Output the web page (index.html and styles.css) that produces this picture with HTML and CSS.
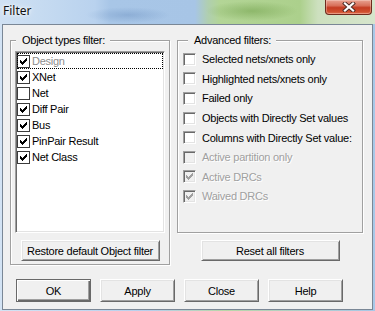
FILE: index.html
```html
<!DOCTYPE html>
<html lang="en">
<head>
    <meta charset="UTF-8">
    <meta name="viewport" content="width=device-width, initial-scale=1.0">
    <title>Filter</title>
    <link rel="stylesheet" href="styles.css">
</head>
<body>
    <div class="window">
        <div class="titlebar">
            <span class="title">Filter</span>
            <div class="close-btn">
                <svg width="14" height="10" viewBox="0 0 14 10">
                    <path d="M3 1.5L11 8.5M11 1.5L3 8.5" stroke="#4a2a24" stroke-width="4" stroke-linecap="square"/>
                    <path d="M3 1.5L11 8.5M11 1.5L3 8.5" stroke="#fff" stroke-width="2.2" stroke-linecap="square"/>
                </svg>
            </div>
        </div>

        <div class="client">
            <div class="panels">
                <!-- Object types -->
                <fieldset class="group group-types">
                    <legend>Object types filter:</legend>
                    <div class="listbox">
                        <div class="list-item focused greyed"><span class="flat-check"><svg class="tick" width="7" height="7" viewBox="0 0 7 7"><path d="M6 0h1v1H6zM5 1h2v1H5zM0 2h1v1H0zM4 2h3v1H4zM0 3h2v1H0zM3 3h3v1H3zM0 4h5v1H0zM1 5h3v1H1zM2 6h1v1H2z"/></svg></span>Design</div>
                        <div class="list-item"><span class="flat-check"><svg class="tick" width="7" height="7" viewBox="0 0 7 7"><path d="M6 0h1v1H6zM5 1h2v1H5zM0 2h1v1H0zM4 2h3v1H4zM0 3h2v1H0zM3 3h3v1H3zM0 4h5v1H0zM1 5h3v1H1zM2 6h1v1H2z"/></svg></span>XNet</div>
                        <div class="list-item"><span class="flat-check"></span>Net</div>
                        <div class="list-item"><span class="flat-check"><svg class="tick" width="7" height="7" viewBox="0 0 7 7"><path d="M6 0h1v1H6zM5 1h2v1H5zM0 2h1v1H0zM4 2h3v1H4zM0 3h2v1H0zM3 3h3v1H3zM0 4h5v1H0zM1 5h3v1H1zM2 6h1v1H2z"/></svg></span>Diff Pair</div>
                        <div class="list-item"><span class="flat-check"><svg class="tick" width="7" height="7" viewBox="0 0 7 7"><path d="M6 0h1v1H6zM5 1h2v1H5zM0 2h1v1H0zM4 2h3v1H4zM0 3h2v1H0zM3 3h3v1H3zM0 4h5v1H0zM1 5h3v1H1zM2 6h1v1H2z"/></svg></span>Bus</div>
                        <div class="list-item"><span class="flat-check"><svg class="tick" width="7" height="7" viewBox="0 0 7 7"><path d="M6 0h1v1H6zM5 1h2v1H5zM0 2h1v1H0zM4 2h3v1H4zM0 3h2v1H0zM3 3h3v1H3zM0 4h5v1H0zM1 5h3v1H1zM2 6h1v1H2z"/></svg></span>PinPair Result</div>
                        <div class="list-item"><span class="flat-check"><svg class="tick" width="7" height="7" viewBox="0 0 7 7"><path d="M6 0h1v1H6zM5 1h2v1H5zM0 2h1v1H0zM4 2h3v1H4zM0 3h2v1H0zM3 3h3v1H3zM0 4h5v1H0zM1 5h3v1H1zM2 6h1v1H2z"/></svg></span>Net Class</div>
                    </div>
                    <button class="btn btn-wide">Restore default Object filter</button>
                </fieldset>

                <!-- Advanced -->
                <div class="column">
                    <fieldset class="group group-advanced">
                        <legend>Advanced filters:</legend>
                        <label class="check-row"><span class="check"></span>Selected nets/xnets only</label>
                        <label class="check-row"><span class="check"></span>Highlighted nets/xnets only</label>
                        <label class="check-row"><span class="check"></span>Failed only</label>
                        <label class="check-row"><span class="check"></span>Objects with Directly Set values</label>
                        <label class="check-row"><span class="check"></span>Columns with Directly Set value:</label>
                        <label class="check-row disabled"><span class="check"></span>Active partition only</label>
                        <label class="check-row disabled"><span class="check"><svg class="tick" width="7" height="7" viewBox="0 0 7 7"><path d="M6 0h1v1H6zM5 1h2v1H5zM0 2h1v1H0zM4 2h3v1H4zM0 3h2v1H0zM3 3h3v1H3zM0 4h5v1H0zM1 5h3v1H1zM2 6h1v1H2z"/></svg></span>Active DRCs</label>
                        <label class="check-row disabled"><span class="check"><svg class="tick" width="7" height="7" viewBox="0 0 7 7"><path d="M6 0h1v1H6zM5 1h2v1H5zM0 2h1v1H0zM4 2h3v1H4zM0 3h2v1H0zM3 3h3v1H3zM0 4h5v1H0zM1 5h3v1H1zM2 6h1v1H2z"/></svg></span>Waived DRCs</label>
                    </fieldset>
                    <button class="btn btn-wide">Reset all filters</button>
                </div>
            </div>

            <div class="actions">
                <button class="btn btn-action btn-default">OK</button>
                <button class="btn btn-action">Apply</button>
                <button class="btn btn-action">Close</button>
                <button class="btn btn-action">Help</button>
            </div>
        </div>
    </div>
</body>
</html>
```

FILE: styles.css
```css
* {
    box-sizing: border-box;
}

body {
    margin: 0;
    font-family: "Liberation Sans", Arial, sans-serif;
    font-size: 11px;
    letter-spacing: -0.25px;
    color: #000;
}

.window {
    width: 375px;
    height: 311px;
    display: flex;
    flex-direction: column;
    overflow: hidden;
    background: linear-gradient(90deg, #d3e3f4, #b6cfec 40%, #b9d6a8 60%, #a8c8e8);
}

/* title bar (aero glass) */
.titlebar {
    height: 24px;
    flex: none;
    display: flex;
    justify-content: space-between;
    align-items: flex-start;
    background:
        radial-gradient(ellipse 42px 8px at 128px 15px, rgba(80, 120, 175, 0.3), transparent),
        radial-gradient(ellipse 46px 10px at 252px 11px, rgba(100, 150, 60, 0.45), transparent),
        linear-gradient(90deg, #d0e1f3 0, #c6dbf1 40px, #b9d2ee 95px, #a8c6e7 110px, #a7c5e6 195px, #b0cfb0 208px, #b3d596 220px, #acd08c 300px, #cde0bf 318px, #d6e5cc 375px);
}

.title {
    font-family: "Noto Sans", sans-serif;
    font-size: 12px;
    letter-spacing: 0;
    line-height: 16px;
    padding: 3px 0 0 3px;
    color: #111;
    text-shadow: 0 0 6px #fff, 0 0 3px #fff;
}

.close-btn {
    width: 47px;
    height: 15px;
    margin-right: 3px;
    display: flex;
    align-items: center;
    justify-content: center;
    border: 1px solid #6e2a1e;
    border-top: none;
    border-radius: 0 0 4px 4px;
    background: linear-gradient(#e8a291, #d8705a 40%, #c43c22 55%, #d0502f 85%, #e07858);
    box-shadow: inset 0 0 0 1px rgba(255, 230, 220, 0.35);
}

/* dialog body */
.client {
    flex: 1;
    margin: 0 2px 1px;
    border: 1px solid #7a8796;
    background: #f0f0f0;
    padding: 9px 9px 7px 7px;
    display: flex;
    flex-direction: column;
}

.panels {
    display: flex;
    gap: 7px;
}

.group {
    margin: 0;
    padding: 0;
    min-width: 0;
    border: 1px solid #a0a0a0;
    box-shadow: inset 1px 1px #fff, 1px 1px #fff;
    display: flex;
    flex-direction: column;
}

.group legend {
    margin-left: 5px;
    padding: 0 5px 0 6px;
    height: 13px;
    line-height: 13px;
    background: #f0f0f0;
}

.group-types {
    width: 160px;
}

.column {
    width: 186px;
    display: flex;
    flex-direction: column;
}

.group-advanced {
    flex: 1;
    padding: 2.5px 0 0 5px;
}

/* list box with flat checkboxes */
.listbox {
    margin: 4px 4px 0;
    height: 182px;
    padding: 1px;
    background: #fff;
    border: 1px solid;
    border-color: #a0a0a0 #fff #fff #a0a0a0;
    box-shadow: inset 1px 1px #696969, inset -1px -1px #e3e3e3;
}

.list-item {
    height: 16px;
    display: flex;
    align-items: center;
    gap: 2px;
    line-height: 16px;
}

.list-item.focused {
    outline: 1px dotted #000;
    outline-offset: -1px;
}

.list-item.greyed {
    color: #8e8e8e;
}

.flat-check {
    width: 13px;
    height: 13px;
    flex: none;
    display: flex;
    align-items: center;
    justify-content: center;
    background: #fff;
    border: 1px solid #3c3c3c;
}

.tick {
    display: block;
    fill: #000;
    shape-rendering: crispEdges;
}

/* 3d checkboxes */
.check-row {
    height: 19.6px;
    display: flex;
    align-items: center;
    gap: 6px;
    white-space: nowrap;
}

.check {
    width: 13px;
    height: 13px;
    flex: none;
    display: flex;
    align-items: center;
    justify-content: center;
    background: #fff;
    border: 1px solid;
    border-color: #a0a0a0 #fff #fff #a0a0a0;
    box-shadow: inset 1px 1px #696969, inset -1px -1px #e3e3e3;
}

.check-row.disabled {
    color: #a0a0a0;
    text-shadow: 1px 1px #fff;
}

.check-row.disabled .check {
    background: #f0f0f0;
}

.check-row.disabled .tick {
    fill: #a0a0a0;
}

/* buttons */
.btn {
    font: inherit;
    letter-spacing: inherit;
    color: #000;
    background: #f0f0f0;
    padding: 0;
    height: 21px;
    border: 1px solid;
    border-color: #fff #696969 #696969 #fff;
    box-shadow: inset 1px 1px #e3e3e3, inset -1px -1px #a0a0a0;
}

.btn-wide {
    width: 139px;
    align-self: center;
    margin: 7px 0 3px;
}

.column .btn-wide {
    margin-bottom: 4px;
}

.actions {
    margin-top: 14px;
    padding-left: 6px;
    display: flex;
    gap: 9px;
}

.btn-action {
    width: 75px;
    height: 23px;
}

.btn-default {
    border-color: #696969;
    box-shadow: inset 1px 1px #fff, inset -1px -1px #696969, inset -2px -2px #a0a0a0;
}
```
